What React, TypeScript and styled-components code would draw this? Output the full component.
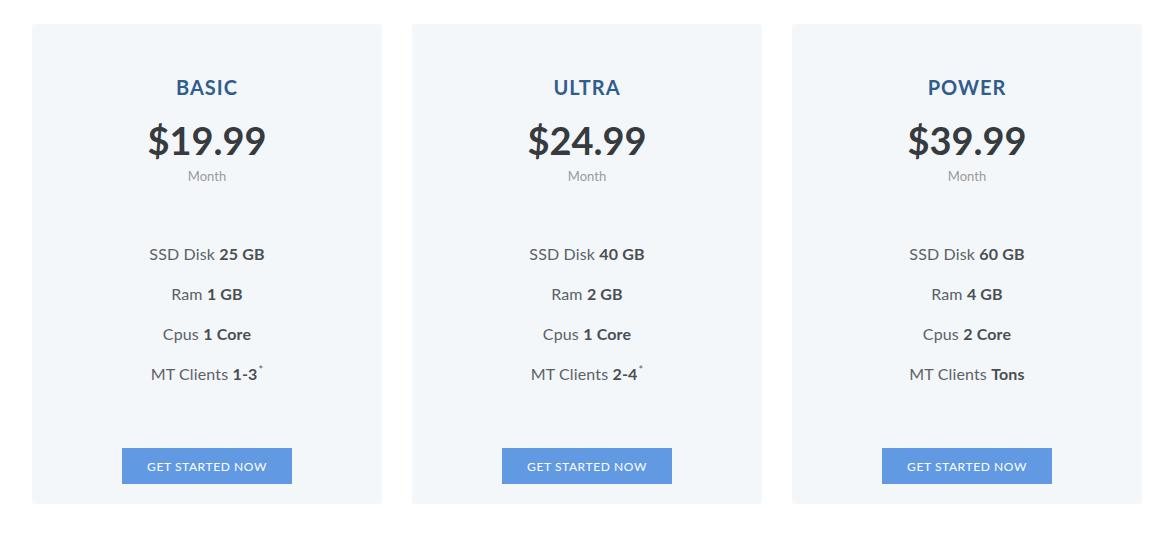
import React from "react";
import styled, { createGlobalStyle } from "styled-components";

const Global = createGlobalStyle`
  html, body { margin: 0; padding: 0; background: #ffffff; }
  body { font-family: Lato, "Open Sans", sans-serif; }
`;

const Row = styled.div`
  display: flex;
  gap: 30px;
  padding: 24px 26px 0 32px;
`;

const Card = styled.div`
  width: 350px;
  height: 480px;
  box-sizing: border-box;
  background: #f4f7fa;
  border-radius: 3px;
  display: flex;
  flex-direction: column;
  align-items: center;
  padding-top: 51px;
`;

const Title = styled.h3`
  margin: 0;
  font-size: 20px;
  line-height: 24px;
  font-weight: 700;
  letter-spacing: 1px;
  color: #2f5d8e;
`;

const Price = styled.div`
  margin-top: 19px;
  font-size: 38px;
  line-height: 44px;
  font-weight: 700;
  color: #363b40;
`;

const Period = styled.div`
  margin-top: 6px;
  font-size: 13px;
  line-height: 16px;
  color: #9a9a9a;
`;

const Features = styled.ul`
  list-style: none;
  margin: 50px 0 0;
  padding: 0;
  text-align: center;
`;

const Feature = styled.li`
  font-size: 16px;
  line-height: 40px;
  color: #5c6166;
  font-weight: 400;
  letter-spacing: 0.15px;
  b { font-weight: 700; color: #4a4f54; }
  sup { font-size: 11px; vertical-align: top; line-height: 32px; margin-left: 1px; }
`;

const Button = styled.button`
  margin-top: 54px;
  width: 170px;
  height: 36px;
  border: none;
  border-radius: 0;
  background: #6199e3;
  color: #ffffff;
  font-family: Lato, "Open Sans", sans-serif;
  font-size: 12px;
  letter-spacing: 0.6px;
  cursor: pointer;
`;

type Plan = {
  name: string;
  price: string;
  disk: string;
  ram: string;
  cpu: string;
  clients: string;
  star: boolean;
};

const plans: Plan[] = [
  { name: "BASIC", price: "$19.99", disk: "25 GB", ram: "1 GB", cpu: "1 Core", clients: "1-3", star: true },
  { name: "ULTRA", price: "$24.99", disk: "40 GB", ram: "2 GB", cpu: "1 Core", clients: "2-4", star: true },
  { name: "POWER", price: "$39.99", disk: "60 GB", ram: "4 GB", cpu: "2 Core", clients: "Tons", star: false },
];

export default function App() {
  return (
    <>
      <Global />
      <Row>
        {plans.map((p) => (
          <Card key={p.name}>
            <Title>{p.name}</Title>
            <Price>{p.price}</Price>
            <Period>Month</Period>
            <Features>
              <Feature>SSD Disk <b>{p.disk}</b></Feature>
              <Feature>Ram <b>{p.ram}</b></Feature>
              <Feature>Cpus <b>{p.cpu}</b></Feature>
              <Feature>
                MT Clients <b>{p.clients}</b>
                {p.star && <sup>*</sup>}
              </Feature>
            </Features>
            <Button>GET STARTED NOW</Button>
          </Card>
        ))}
      </Row>
    </>
  );
}
